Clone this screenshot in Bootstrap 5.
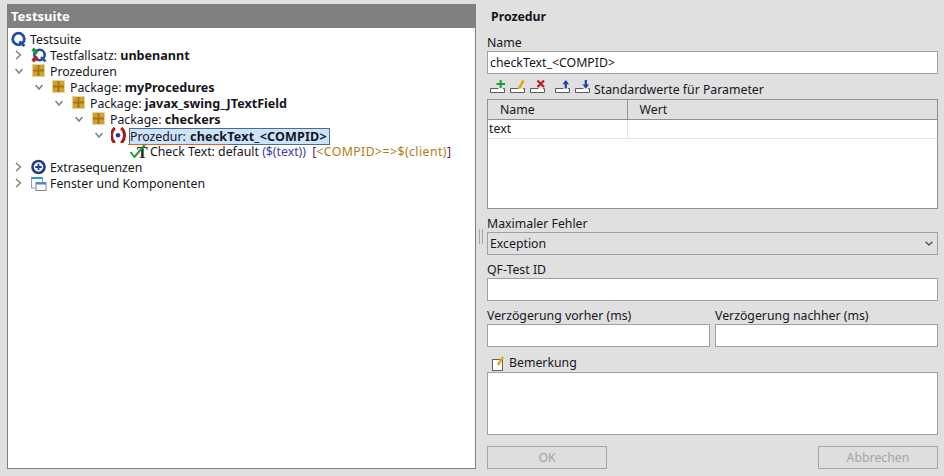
<!DOCTYPE html>
<html lang="de">
<head>
  <meta charset="UTF-8" />
  <meta name="viewport" content="width=device-width, initial-scale=1.0"/>
  <title>Testsuite - Prozedur</title>
  <link href="https://cdn.jsdelivr.net/npm/bootstrap@5.3.3/dist/css/bootstrap.min.css" rel="stylesheet">
  <style>
    /* -------- base -------- */
    html,body{height:100%;}
    body{background:#e0e0e0;color:#16161e;font-family:"Noto Sans","Open Sans",sans-serif;font-size:12.3px;line-height:16px;overflow:hidden;}
    .app-wrap{height:476px;padding:4px 6px 7px 7px;}

    /* left tree */
    .tree-pane{width:469px;}
    .tree-head{height:24px;line-height:24px;background:#808080;color:#fff;font-weight:700;font-size:13px;padding-left:4px;}
    .tree-body{background:#fff;border:1px solid #808080;border-top:0;padding-top:3px;}
    .tree-row{height:16px;white-space:nowrap;}
    .tree-row>span:last-child{position:relative;top:1px;}
    .lv0,.lv1{padding-left:3px;}
    .lv2{padding-left:23px;}
    .lv3{padding-left:43px;}
    .lv4{padding-left:63px;}
    .lv5{padding-left:83px;}
    .lv6{padding-left:103px;}
    .chev-slot{width:20px;flex:none;padding-left:4px;display:flex;align-items:center;}
    .tree-ico{width:16px;height:16px;flex:none;margin-right:3px;overflow:visible;}
    .tree-sel{background:#cce4fb;border:1px solid #4c6c8c;margin-left:-1px;padding:0 2px 0 0;height:17px;line-height:15px;}
    .tree-sel::after{content:"";position:absolute;left:-2px;bottom:-1px;width:100px;height:1px;background:#e0602a;}
    .tree-sel .val-b{margin-left:1px;letter-spacing:.15px;}
    .val-b{font-weight:700;font-size:12.6px;}
    .tx-var{color:#3c3cb0;}
    .tx-brk{color:#5a1f6e;}
    .tx-open{margin-left:3px;}
    .tx-cmp{color:#b87a10;letter-spacing:.42px;}

    /* splitter */
    .split-bar{width:11px;}
    .split-grip{width:4px;height:15px;margin-left:-1px;border-left:1px solid #a6a6a6;border-right:1px solid #a6a6a6;}

    /* right form */
    .form-pane{width:451px;}
    .pane-title{font-weight:700;height:16px;margin:5px 0 9px 4px;}
    .fld-lbl{height:17px;line-height:17px;}
    .fld-gap{margin-top:6px;}
    .form-control.fld,.form-select.fld{height:23px;min-height:0;padding:0 2px;border:1px solid #a0a0a0;border-radius:0;font-size:12.3px;line-height:20px;color:#16161e;box-shadow:none;}
    .form-select.fld{background-color:#e0e0e0;padding-right:16px;background-image:url("data:image/svg+xml,%3csvg xmlns='http://www.w3.org/2000/svg' viewBox='0 0 8 5'%3e%3cpath fill='none' stroke='%23555' stroke-width='1.4' d='M.6.8 4 4 7.4.8'/%3e%3c/svg%3e");background-size:8px 5px;background-position:right 4px center;}
    .form-control.note-area{height:63px;resize:none;}

    .param-bar{height:19px;margin-top:6px;}
    .tb-ico{width:15px;height:13px;flex:none;margin:0 5px 6px 0;overflow:visible;}
    .tb-sep{margin-right:10px;}
    .tb-first{margin-left:3px;}
    .tb-last{margin-right:4px;}
    .param-box{height:110px;background:#fff;border:1px solid #909090;}
    .param-tbl{margin:0;font-size:12.3px;color:#16161e;table-layout:fixed;--bs-table-color:#16161e;}
    .param-tbl th{font-weight:400;background:#e0e0e0;height:19px;padding:0 0 0 12px;border-bottom:1px solid #909090;border-right:1px solid #909090;line-height:18px;}
    .param-tbl th:last-child{border-right:0;}
    .param-tbl td{height:19px;padding:0 1px;border-bottom:1px solid #e4e4e4;border-right:1px solid #e4e4e4;line-height:18px;}
    .param-tbl td:last-child{border-right:0;}
    .col-name{width:139px;}

    .delay-col{width:223px;}

    .note-ico{width:13px;height:15px;margin:0 4px 0 5px;flex:none;overflow:visible;}
    .note-lbl{height:18px;margin-top:7px;}

    .foot-bar{margin-top:11px;}
    .btn.foot-btn:disabled{width:120px;height:23px;padding:0;border:1px solid #a6a6a6;border-radius:0;background:#dedede;color:#a4a4a8;font-size:12.3px;line-height:20px;opacity:1;}
  </style>
</head>
<body>

<svg width="0" height="0" class="position-absolute">
  <defs>
    <symbol id="i-q" viewBox="0 0 16 16">
      <circle cx="7.500" cy="8" r="5.800" fill="none" stroke="#1c4fa8" stroke-width="2.800"/>
      <path d="M8.500 10.500 13.500 15" stroke="#1c4fa8" stroke-width="2.800" fill="none"/>
    </symbol>
    <symbol id="i-set" viewBox="0 0 16 16">
      <circle cx="8.500" cy="8" r="5.200" fill="none" stroke="#1c4fa8" stroke-width="2.600"/>
      <path d="M10 10 14.500 14.500" stroke="#1c4fa8" stroke-width="2.400" fill="none"/>
      <path d="M1.500 2 6.500 6" stroke="#1f9a35" stroke-width="3.600" fill="none"/>
      <path d="M1.500 14 6.500 10" stroke="#b8201c" stroke-width="3.600" fill="none"/>
    </symbol>
    <symbol id="i-pkg" viewBox="0 0 16 16">
      <rect x="1.500" y="1.500" width="12" height="12" fill="#cfa22c" stroke="#e8d49a"/>
      <path d="M7.500 2V13M2 7.500H13" stroke="#a27614" stroke-width="2"/>
    </symbol>
    <symbol id="i-proc" viewBox="0 0 16 16">
      <path d="M3.800 1C-.6 5-.6 12 3.800 16M10.200 1C14.600 5 14.600 12 10.200 16" fill="none" stroke="#a81c20" stroke-width="3"/>
      <circle cx="7" cy="8.200" r="2.300" fill="#1f3fa0"/>
    </symbol>
    <symbol id="i-extra" viewBox="0 0 16 16">
      <circle cx="7.500" cy="8" r="6" fill="#fff" stroke="#1f3c8c" stroke-width="2.600"/>
      <path d="M7.500 4.800V11.200M4.300 8H10.700" stroke="#1f3c8c" stroke-width="1.800"/>
    </symbol>
    <symbol id="i-win" viewBox="0 0 16 16">
      <rect x=".5" y="2.500" width="11" height="10.500" fill="#fff" stroke="#8aa4bc"/>
      <path d="M.5 3H11.500" stroke="#2f8fe0" stroke-width="2"/>
      <rect x="5" y="7.500" width="10" height="8" fill="#fff" stroke="#8a8a8a"/>
      <path d="M5 8.500H15" stroke="#2f8fe0" stroke-width="2"/>
    </symbol>
    <symbol id="t-base" viewBox="0 0 15 13">
      <path d="M.5 8.500H8V8M.5 8.500V12.500H14.500V8.500H13" fill="#fff" stroke="#5a5a5a"/>
    </symbol>
  </defs>
</svg>

<div class="app-wrap d-flex">

  <!-- tree side -->
  <div class="tree-pane d-flex flex-column">
    <div class="tree-head">Testsuite</div>
    <div class="tree-body flex-grow-1">
      <div class="tree-row d-flex align-items-center lv0">
        <svg class="tree-ico"><use href="#i-q"/></svg><span>Testsuite</span>
      </div>
      <div class="tree-row d-flex align-items-center lv1">
        <span class="chev-slot"><svg width="7" height="10" viewBox="0 0 7 10"><path d="M1 1 5.500 5 1 9" fill="none" stroke="#808080" stroke-width="1.500"/></svg></span>
        <svg class="tree-ico"><use href="#i-set"/></svg><span>Testfallsatz: <span class="val-b">unbenannt</span></span>
      </div>
      <div class="tree-row d-flex align-items-center lv1">
        <span class="chev-slot"><svg width="8" height="7" viewBox="0 0 8 7"><path d="M.5 1 4 5 7.500 1" fill="none" stroke="#808080" stroke-width="1.500"/></svg></span>
        <svg class="tree-ico"><use href="#i-pkg"/></svg><span>Prozeduren</span>
      </div>
      <div class="tree-row d-flex align-items-center lv2">
        <span class="chev-slot"><svg width="8" height="7" viewBox="0 0 8 7"><path d="M.5 1 4 5 7.500 1" fill="none" stroke="#808080" stroke-width="1.500"/></svg></span>
        <svg class="tree-ico"><use href="#i-pkg"/></svg><span>Package: <span class="val-b">myProcedures</span></span>
      </div>
      <div class="tree-row d-flex align-items-center lv3">
        <span class="chev-slot"><svg width="8" height="7" viewBox="0 0 8 7"><path d="M.5 1 4 5 7.500 1" fill="none" stroke="#808080" stroke-width="1.500"/></svg></span>
        <svg class="tree-ico"><use href="#i-pkg"/></svg><span>Package: <span class="val-b">javax_swing_JTextField</span></span>
      </div>
      <div class="tree-row d-flex align-items-center lv4">
        <span class="chev-slot"><svg width="8" height="7" viewBox="0 0 8 7"><path d="M.5 1 4 5 7.500 1" fill="none" stroke="#808080" stroke-width="1.500"/></svg></span>
        <svg class="tree-ico"><use href="#i-pkg"/></svg><span>Package: <span class="val-b">checkers</span></span>
      </div>
      <div class="tree-row d-flex align-items-center lv5">
        <span class="chev-slot"><svg width="8" height="7" viewBox="0 0 8 7"><path d="M.5 1 4 5 7.500 1" fill="none" stroke="#808080" stroke-width="1.500"/></svg></span>
        <svg class="tree-ico"><use href="#i-proc"/></svg><span class="tree-sel">Prozedur: <span class="val-b">checkText_&lt;COMPID&gt;</span></span>
      </div>
      <div class="tree-row d-flex align-items-center lv6">
        <span class="chev-slot"></span>
        <svg class="tree-ico" viewBox="0 0 16 16">
          <text x="6" y="15" font-family="Liberation Serif" font-weight="700" font-size="16" fill="#222">T</text>
          <path d="M-.5 9 3.500 14 14.500 1" fill="none" stroke="#1f9e2e" stroke-width="2"/>
        </svg>
        <span>Check Text: default <span class="tx-var">($(text))</span> <span class="tx-brk tx-open">[</span><span class="tx-cmp">&lt;COMPID&gt;=&gt;$(client)</span><span class="tx-brk">]</span></span>
      </div>
      <div class="tree-row d-flex align-items-center lv1">
        <span class="chev-slot"><svg width="7" height="10" viewBox="0 0 7 10"><path d="M1 1 5.500 5 1 9" fill="none" stroke="#808080" stroke-width="1.500"/></svg></span>
        <svg class="tree-ico"><use href="#i-extra"/></svg><span>Extrasequenzen</span>
      </div>
      <div class="tree-row d-flex align-items-center lv1">
        <span class="chev-slot"><svg width="7" height="10" viewBox="0 0 7 10"><path d="M1 1 5.500 5 1 9" fill="none" stroke="#808080" stroke-width="1.500"/></svg></span>
        <svg class="tree-ico"><use href="#i-win"/></svg><span>Fenster und Komponenten</span>
      </div>
    </div>
  </div>

  <!-- splitter -->
  <div class="split-bar d-flex align-items-center justify-content-center"><div class="split-grip"></div></div>

  <!-- form side -->
  <div class="form-pane d-flex flex-column">
    <div class="pane-title">Prozedur</div>

    <div class="fld-lbl">Name</div>
    <input class="form-control fld" type="text" value="checkText_&lt;COMPID&gt;">

    <div class="param-bar d-flex align-items-center">
      <svg class="tb-ico tb-first" viewBox="0 0 15 13"><use href="#t-base"/><path d="M6.500 4H15M10.700 0V8" stroke="#18a02c" stroke-width="2"/></svg>
      <svg class="tb-ico" viewBox="0 0 15 13"><use href="#t-base"/><path d="M9 8.500 13.500 .5" stroke="#e0a810" stroke-width="2.600"/></svg>
      <svg class="tb-ico tb-sep" viewBox="0 0 15 13"><use href="#t-base"/><path d="M7.500 .5 14 7M14 .5 7.500 7" stroke="#c01c20" stroke-width="2.200"/></svg>
      <svg class="tb-ico" viewBox="0 0 15 13"><use href="#t-base"/><path d="M10.800 8.500V3" stroke="#1c3fa8" stroke-width="2.200"/><path d="M7.500 4.200 10.800 0 14.100 4.200Z" fill="#1c3fa8"/></svg>
      <svg class="tb-ico tb-last" viewBox="0 0 15 13"><use href="#t-base"/><path d="M10.800 0V5" stroke="#1c3fa8" stroke-width="2.200"/><path d="M7.500 4.500 10.800 8.700 14.100 4.500Z" fill="#1c3fa8"/></svg>
      <span>Standardwerte für Parameter</span>
    </div>

    <div class="param-box">
      <table class="table param-tbl">
        <thead><tr><th class="col-name">Name</th><th>Wert</th></tr></thead>
        <tbody><tr><td>text</td><td></td></tr></tbody>
      </table>
    </div>

    <div class="fld-lbl fld-gap">Maximaler Fehler</div>
    <select class="form-select fld"><option>Exception</option></select>

    <div class="fld-lbl fld-gap">QF-Test ID</div>
    <input class="form-control fld" type="text">

    <div class="d-flex justify-content-between fld-gap">
      <div class="delay-col">
        <div class="fld-lbl">Verzögerung vorher (ms)</div>
        <input class="form-control fld" type="text">
      </div>
      <div class="delay-col">
        <div class="fld-lbl">Verzögerung nachher (ms)</div>
        <input class="form-control fld" type="text">
      </div>
    </div>

    <div class="note-lbl d-flex align-items-center">
      <svg class="note-ico" viewBox="0 0 13 15">
        <rect x=".5" y="3.500" width="10" height="11" fill="#fff" stroke="#606060"/>
        <path d="M6 9 11 1" stroke="#e0a810" stroke-width="2.400"/>
      </svg>
      <span>Bemerkung</span>
    </div>
    <textarea class="form-control fld note-area"></textarea>

    <div class="foot-bar d-flex justify-content-between">
      <button class="btn foot-btn" disabled>OK</button>
      <button class="btn foot-btn" disabled>Abbrechen</button>
    </div>
  </div>

</div>
</body>
</html>
